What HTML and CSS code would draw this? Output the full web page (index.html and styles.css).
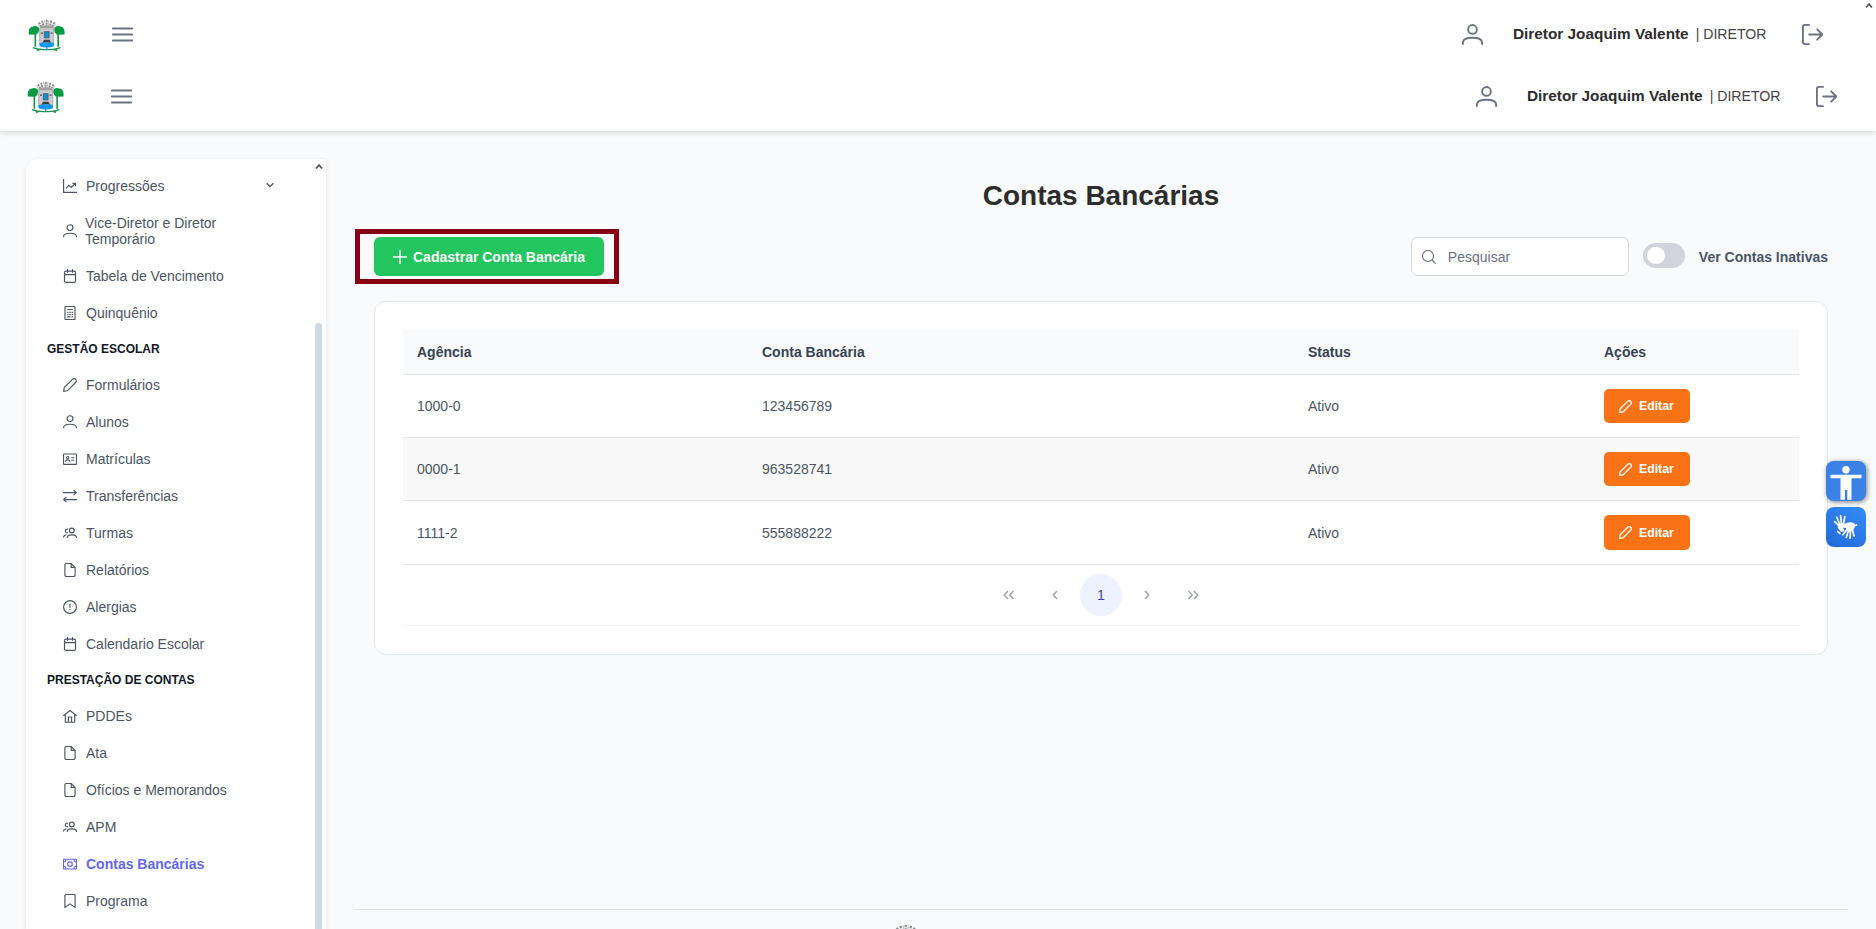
FILE: index.html
```html
<!DOCTYPE html>
<html lang="pt-BR">
<head>
<meta charset="utf-8">
<title>Contas Bancárias</title>
<link rel="stylesheet" href="styles.css">
</head>
<body>
<svg class="sprite" aria-hidden="true">
  <symbol id="user" viewBox="0 0 14 14"><circle cx="7" cy="3.6" r="2.9"/><path d="M.6 13.300v-.8C.6 10.500 3 9.200 7 9.200s6.400 1.300 6.400 3.300v.8"/></symbol>
  <symbol id="bars" viewBox="0 0 21 21"><path d="M.8 4.500h19.400M.8 10.500h19.400M.8 16.500h19.400"/></symbol>
  <symbol id="logout" viewBox="0 0 21 21"><path d="M7 .9H3Q.9.9.9 3v15Q.9 20.100 3 20.100H7M7.200 10.500h13M15.200 5.300l5.200 5.200-5.200 5.200"/></symbol>
  <symbol id="chart" viewBox="0 0 14 14"><path d="M.6 0v13.400H14M3.200 9.300l2.600-3 2.400 2.200 4-4M9.500 4.300h3v3"/></symbol>
  <symbol id="calendar" viewBox="0 0 14 14"><rect x="1.500" y="2.100" width="11" height="11.300" rx="1.200"/><path d="M1.500 5.600h11M4.500 0v3.800M9.500 0v3.800"/></symbol>
  <symbol id="calc" viewBox="0 0 14 14"><rect x="2" y=".5" width="10" height="13" rx=".6"/><path d="M4.200 3.500h5.600M4.200 6.400h1.300M6.400 6.400h1.300M8.600 6.400h1.300M4.200 8.600h1.300M6.400 8.600h1.300M8.600 8.600h1.300M4.200 10.800h3.400M8.600 10.800h1.300"/></symbol>
  <symbol id="pencil" viewBox="0 0 14 14"><path d="M.7 13.300l.5-3.700 8.300-8.300q1.500-1.300 3.100 0 1.500 1.600 0 3.200l-8.300 8.300z"/></symbol>
  <symbol id="card" viewBox="0 0 14 14"><rect x=".5" y="2" width="13" height="10.300" rx=".6"/><circle cx="4.700" cy="5.600" r="1.100"/><path d="M2.500 9.800q0-2 2.200-2t2.200 2M8.300 5.700h3M8.300 8.200h3"/></symbol>
  <symbol id="swap" viewBox="0 0 14 14"><path d="M0 3.600h13.300M10.600 1l2.700 2.600-2.700 2.600M14 10.600H.7M3.400 8L.7 10.600l2.700 2.600"/></symbol>
  <symbol id="users" viewBox="0 0 14 14"><circle cx="8.800" cy="4.500" r="2.400"/><path d="M4.300 12v-.6c0-1.600 1.700-2.600 4.600-2.600s4.600 1 4.600 2.600v.6M5 6.600C3.500 7 2.300 6.200 2.300 5S3.600 2.900 5 3.300M.5 11.500c0-1.700 1.200-2.600 3-2.800"/></symbol>
  <symbol id="file" viewBox="0 0 14 14"><path d="M8.200.5H3.300Q1.900.5 1.900 1.900v10.200q0 1.400 1.400 1.400h7.400q1.400 0 1.400-1.400V4.400zM8.200.5v3.900h3.900"/></symbol>
  <symbol id="alert" viewBox="0 0 14 14"><circle cx="7" cy="7" r="6.400"/><path d="M7 3.700v4M7 9v1.300"/></symbol>
  <symbol id="home" viewBox="0 0 14 14"><path d="M.3 6.800L7 1.500l6.700 5.300M2.300 5.600v7.600h9.400V5.600M5.400 13V8h3.200v5"/></symbol>
  <symbol id="money" viewBox="0 0 14 14"><rect x=".5" y="2.200" width="13" height="9.800" rx=".5"/><circle cx="7" cy="7.100" r="2.300"/><path d="M.7 5q2 0 2.200-2.700M13.300 5q-2 0-2.200-2.700M.7 9.200q2 0 2.200 2.700M13.300 9.200q-2 0-2.200 2.700"/></symbol>
  <symbol id="bookmark" viewBox="0 0 14 14"><path d="M1.900 13.400V1.600Q1.900.5 3 .5h8q1.100 0 1.100 1.100v11.800L7 9.900z"/></symbol>
  <symbol id="plus" viewBox="0 0 14 14"><path d="M7 0v14M0 7h14"/></symbol>
  <symbol id="search" viewBox="0 0 14 14"><circle cx="6" cy="6" r="5.500"/><path d="M10 10l3.700 3.700"/></symbol>
  <symbol id="crest" viewBox="0 0 38 34">
    <path d="M11.300 3.500l2.500 4.500M14.500 1.700l1.500 6M19.200.8v7M24 1.700l-1.500 6M27.200 3.500L24.700 8" fill="none" stroke="#8c8c8c" stroke-width="2" stroke-dasharray="2.200 .7"/>
    <path d="M9.800 4.500l2 3.700M17 1l.6 6M21.500 1l-.6 6M28.700 4.500l-2 3.700" fill="none" stroke="#c2c2c2" stroke-width="1"/>
    <path d="M12.500 7.300q6.700-1.600 13.500 0v2H12.500z" fill="#a3a3a3"/>
    <g fill="none" stroke="#14934a" stroke-width="1.700"><path d="M7.500 14v14.500M31 14v14.500"/><path d="M5 29.500q6 2.500 14.300 2 8 .5 14-2M9 32.200l4-1M30 32.200l-4-1" stroke-width="1.400"/></g>
    <path d="M.8 16Q-.2 8.500 5 7.700q4-1.400 6.200 1.300Q12 14.500 8 16.200z" fill="#069b42"/>
    <path d="M37.500 16q1-7.500-4.200-8.300-4-1.400-6.200 1.300-.8 5.500 3.200 7.200z" fill="#069b42"/>
    <path d="M12 9h14.500v17.500q-7 3-14.500 0z" fill="#cbcbce" stroke="#909090" stroke-width=".7"/>
    <path d="M16.700 13h5v6.500h-5z" fill="#178bcc" stroke="#31556a" stroke-width=".7"/>
    <path d="M11.800 25q3-1.500 5-1h5q2-.5 4.800 1v3q-7 2.700-14.800 0z" fill="#1597ee"/>
    <path d="M15 24.300l1.500-2.800h5.500l1.500 2.800q-4.200-1-8.500 0z" fill="#3b3b3b"/>
    <path d="M13.300 14.500h2M23.200 14.500h2" stroke="#444"/>
    <path d="M19.300 28v4" stroke="#1785c8"/>
  </symbol>
</svg>

<header class="topbar">
  <div class="toprow">
    <svg class="crest"><use href="#crest"/></svg>
    <svg class="icon-lg menu"><use href="#bars"/></svg>
    <svg class="icon-lg person"><use href="#user"/></svg>
    <span class="who"><b>Diretor Joaquim Valente</b><span class="role">| DIRETOR</span></span>
    <svg class="icon-lg"><use href="#logout"/></svg>
  </div>
  <div class="toprow second">
    <svg class="crest"><use href="#crest"/></svg>
    <svg class="icon-lg menu"><use href="#bars"/></svg>
    <svg class="icon-lg person"><use href="#user"/></svg>
    <span class="who"><b>Diretor Joaquim Valente</b><span class="role">| DIRETOR</span></span>
    <svg class="icon-lg"><use href="#logout"/></svg>
  </div>
  <svg class="page-arrow" viewBox="0 0 8 7"><path d="M1 5.500l3-3.300 3 3.300"/></svg>
</header>

<div class="layout">
  <aside class="sidebar">
    <nav>
      <a class="item"><svg><use href="#chart"/></svg>Progressões<svg class="chev" viewBox="0 0 8 8"><path d="M.7 2.300L4 5.600l3.300-3.300"/></svg></a>
      <a class="item tall"><svg><use href="#user"/></svg><span>Vice-Diretor e Diretor Temporário</span></a>
      <a class="item"><svg><use href="#calendar"/></svg>Tabela de Vencimento</a>
      <a class="item"><svg><use href="#calc"/></svg>Quinquênio</a>
      <h2>GESTÃO ESCOLAR</h2>
      <a class="item"><svg><use href="#pencil"/></svg>Formulários</a>
      <a class="item"><svg><use href="#user"/></svg>Alunos</a>
      <a class="item"><svg><use href="#card"/></svg>Matrículas</a>
      <a class="item"><svg><use href="#swap"/></svg>Transferências</a>
      <a class="item"><svg><use href="#users"/></svg>Turmas</a>
      <a class="item"><svg><use href="#file"/></svg>Relatórios</a>
      <a class="item"><svg><use href="#alert"/></svg>Alergias</a>
      <a class="item"><svg><use href="#calendar"/></svg>Calendario Escolar</a>
      <h2>PRESTAÇÃO DE CONTAS</h2>
      <a class="item"><svg><use href="#home"/></svg>PDDEs</a>
      <a class="item"><svg><use href="#file"/></svg>Ata</a>
      <a class="item"><svg><use href="#file"/></svg>Ofícios e Memorandos</a>
      <a class="item"><svg><use href="#users"/></svg>APM</a>
      <a class="item active"><svg><use href="#money"/></svg>Contas Bancárias</a>
      <a class="item"><svg><use href="#bookmark"/></svg>Programa</a>
    </nav>
    <div class="scroll">
      <svg viewBox="0 0 8 7"><path d="M1 5.500l3-3.300 3 3.300"/></svg>
      <div class="thumb"></div>
    </div>
  </aside>

  <main>
    <div class="content">
      <h1>Contas Bancárias</h1>
      <div class="toolbar">
        <div class="add-wrap">
          <button class="add"><svg><use href="#plus"/></svg>Cadastrar Conta Bancária</button>
          <div class="highlight"></div>
        </div>
        <label class="search"><svg><use href="#search"/></svg><input type="text" placeholder="Pesquisar"></label>
        <div class="switch"></div>
        <span class="switch-label">Ver Contas Inativas</span>
      </div>
      <section class="card">
        <table>
          <colgroup><col class="c1"><col class="c2"><col class="c3"><col></colgroup>
          <thead><tr><th>Agência</th><th>Conta Bancária</th><th>Status</th><th>Ações</th></tr></thead>
          <tbody>
            <tr><td>1000-0</td><td>123456789</td><td>Ativo</td><td><button class="edit"><svg><use href="#pencil"/></svg>Editar</button></td></tr>
            <tr><td>0000-1</td><td>963528741</td><td>Ativo</td><td><button class="edit"><svg><use href="#pencil"/></svg>Editar</button></td></tr>
            <tr><td>1111-2</td><td>555888222</td><td>Ativo</td><td><button class="edit"><svg><use href="#pencil"/></svg>Editar</button></td></tr>
          </tbody>
        </table>
        <div class="pager">
          <span><svg viewBox="0 0 12 10"><path d="M5 1L1.200 5 5 9M10.500 1L6.700 5l3.800 4"/></svg></span>
          <span><svg viewBox="0 0 12 10"><path d="M8 1L4.200 5 8 9"/></svg></span>
          <span class="current">1</span>
          <span><svg viewBox="0 0 12 10"><path d="M4 1l3.800 4L4 9"/></svg></span>
          <span><svg viewBox="0 0 12 10"><path d="M1.500 1l3.800 4-3.800 4M7 1l3.800 4L7 9"/></svg></span>
        </div>
      </section>
    </div>
    <footer><svg class="crest"><use href="#crest"/></svg></footer>
  </main>
</div>

<div class="widgets">
  <div class="widget access"><svg viewBox="0 0 40 40"><circle cx="20" cy="8.700" r="3.700"/><path d="M4.500 13.700h31v3.500H25.500v21.600h-4.200V29h-2.400v9.800h-4.400V17.200H4.500z"/></svg></div>
  <div class="widget signs"><svg viewBox="0 0 40 40">
    <path d="M12 17.500l3.500-1.500 3.500 1 1.500 2-3.500 1.500 1.500 3.500-3 .7-2.500-3z"/>
    <path class="fingers" d="M13.200 19L8.700 14.700M13.800 17.500l-3-7.300M15.500 17l-.9-8.500M17.500 17.200l1.300-7.700M12.500 20.500l3 3.500"/>
    <path d="M17.500 17.300l4.500-1.800q4.500-1 7 1.500.5 3.500-2 6.500l-3 1.500-3-1-1-3-3.500-.5z"/>
    <path class="fingers" d="M21 22.500l-4.200 5.300M22.500 23.500l-2.200 7M24.500 24l-.5 7.200M26.500 23l1.500 6M28 19l2.500-1M11.500 24.500l2.500 2"/>
  </svg></div>
</div>
</body>
</html>
```

FILE: styles.css
```css
* { box-sizing: border-box; }
body {
  margin: 0;
  width: 1876px;
  height: 929px;
  overflow: hidden;
  display: flex;
  flex-direction: column;
  background: #f8fafc;
  color: #4b5563;
  font: 14px/16px "Liberation Sans", Arial, sans-serif;
}
button, input { font: inherit; }
svg { fill: none; stroke: currentColor; stroke-width: 1.15; flex: none; }
.sprite { position: absolute; width: 0; height: 0; }

.topbar {
  position: relative;
  z-index: 1;
  height: 131px;
  flex: none;
  padding-top: 4px;
  background: #fff;
  box-shadow: 0 2px 5px rgba(0, 0, 0, .12);
}
.toprow {
  height: 62px;
  display: flex;
  align-items: center;
  padding: 0 53px 0 28px;
}
.toprow.second { padding: 0 39px 0 27px; }
.crest { width: 37px; height: 33px; stroke: none; }
.icon-lg { width: 21px; height: 21px; margin-bottom: 1px; color: #6b7280; stroke-width: 1.9; stroke-linecap: round; }
.menu { margin-left: 47px; }
.person { margin-left: auto; stroke-width: 1.25; }
.who { width: 319px; padding-left: 30px; margin-bottom: 2px; color: #2d2d2d; font-size: 15.35px; white-space: nowrap; }
.role { margin-left: 7px; color: #444; font-size: 14.1px; }
.page-arrow { position: absolute; right: 3px; top: 2px; width: 8px; height: 7px; color: #555; stroke-width: 1.8; }

.layout { display: flex; flex: 1; min-height: 0; }
.sidebar {
  display: flex;
  justify-content: space-between;
  width: 300px;
  margin: 28px 29px 0 26px;
  border-radius: 12px 3px 0 0;
  background: #fff;
  box-shadow: 0 1px 4px rgba(0, 0, 0, .1);
  overflow: hidden;
}
nav { width: 236px; padding: 8px 0 0 21px; }
.item { display: flex; align-items: center; gap: 9px; height: 37px; padding-left: 16px; white-space: nowrap; }
.item svg { width: 14px; height: 14px; }
.item span { white-space: normal; width: 150px; }
.item.tall { height: 53px; gap: 8px; }
.item .chev { width: 8px; height: 8px; margin: 0 -12px 2px auto; stroke-width: 1.3; }
.item.active { color: #6366f1; font-weight: 700; }
nav h2 { margin: 0; height: 35px; padding-top: 10px; color: #111827; font-size: 12px; }
.scroll { display: flex; flex-direction: column; align-items: center; width: 7px; margin-right: 4px; color: #555; }
.scroll svg { width: 8px; height: 7px; margin-top: 4px; stroke-width: 1.8; }
.thumb { width: 7px; flex: 1; margin-top: 153px; border-radius: 4px 4px 0 0; background: #cfd9e2; }

main { display: flex; flex-direction: column; justify-content: space-between; width: 1493px; }
.content { padding: 49px 20px 0 19px; }
h1 { margin: 0; color: #2d2d2d; font-size: 28px; line-height: 32px; text-align: center; }
.toolbar { display: flex; align-items: center; margin-top: 25px; height: 39px; }
.add-wrap { position: relative; margin-right: auto; }
.add {
  display: flex;
  align-items: center;
  gap: 6px;
  width: 230px;
  height: 39px;
  padding: 0 0 0 19px;
  border: 0;
  border-radius: 6px;
  background: #22c55e;
  color: #fff;
  font-weight: 700;
  white-space: nowrap;
}
.add svg { width: 14px; height: 14px; stroke-width: 1.4; }
.highlight { position: absolute; inset: -8px -15px -8px -19px; border: 5px solid #880015; }
.search {
  display: flex;
  align-items: center;
  gap: 12px;
  width: 218px;
  height: 39px;
  padding-left: 10px;
  border: 1px solid #d1d5db;
  border-radius: 6px;
  background: #fff;
  color: #6b7280;
}
.search svg { width: 14px; height: 14px; }
.search input { width: 150px; padding: 0; border: 0; outline: 0; color: #4b5563; background: none; }
.search input::placeholder { color: #6b7280; opacity: 1; }
.switch { width: 42px; height: 25px; margin: 0 14px 2px; padding: 4px; border-radius: 13px; background: #d1d5db; }
.switch::before { content: ""; display: block; width: 18px; height: 17px; border-radius: 9px; background: #fff; }
.switch-label { font-weight: 700; }

.card { height: 354px; margin-top: 25px; padding: 28px; border: 1px solid #e2e8f0; border-radius: 12px; background: #fff; }
table { width: 100%; table-layout: fixed; border-collapse: separate; border-spacing: 0; }
.c1 { width: 345px; }
.c2 { width: 546px; }
.c3 { width: 296px; }
th, td { padding: 0 14px; text-align: left; border-bottom: 1px solid #e5e7eb; }
th { height: 45px; background: #f8fafc; color: #374151; }
td { height: 63px; }
tbody tr:nth-child(2) td { background: #f9f9f9; }
tbody tr:nth-child(3) td { height: 64px; }
.edit {
  display: flex;
  align-items: center;
  gap: 8px;
  width: 86px;
  height: 34px;
  padding: 0 0 0 15px;
  border: 0;
  border-radius: 5px;
  background: #f97316;
  color: #fff;
  font-size: 12.25px;
  font-weight: 700;
}
tr:nth-child(3) .edit { height: 35px; }
.edit svg { width: 13px; height: 13px; margin-right: -1px; stroke-width: 1.4; }
.pager { display: flex; justify-content: center; align-items: center; gap: 4px; height: 61px; border-bottom: 1px solid #f3f4f6; }
.pager span { display: flex; align-items: center; justify-content: center; width: 42px; height: 42px; border-radius: 50%; color: #6b7280; }
.pager svg { width: 12px; height: 10px; opacity: .65; stroke-width: 1.5; }
.pager .current { background: #eef2ff; color: #4338ca; }
footer { height: 20px; border-top: 1px solid #dfe3e7; padding: 14px 0 0 529px; overflow: hidden; }
footer .crest { width: 43px; height: 38px; }

.widgets { position: absolute; left: 1826px; top: 461px; display: grid; gap: 6px; }
.widget { width: 40px; height: 40px; border-radius: 8px; color: #fff; }
.widget svg { display: block; width: 40px; height: 40px; fill: currentColor; stroke: none; }
.widget .fingers { fill: none; stroke: currentColor; stroke-width: 1.7; stroke-linecap: round; }
.access { background: #3b82e6; box-shadow: 1px 1px 5px rgba(0, 0, 0, .5); }
.signs { background: linear-gradient(35deg, #2368d8, #338df8); }
```
